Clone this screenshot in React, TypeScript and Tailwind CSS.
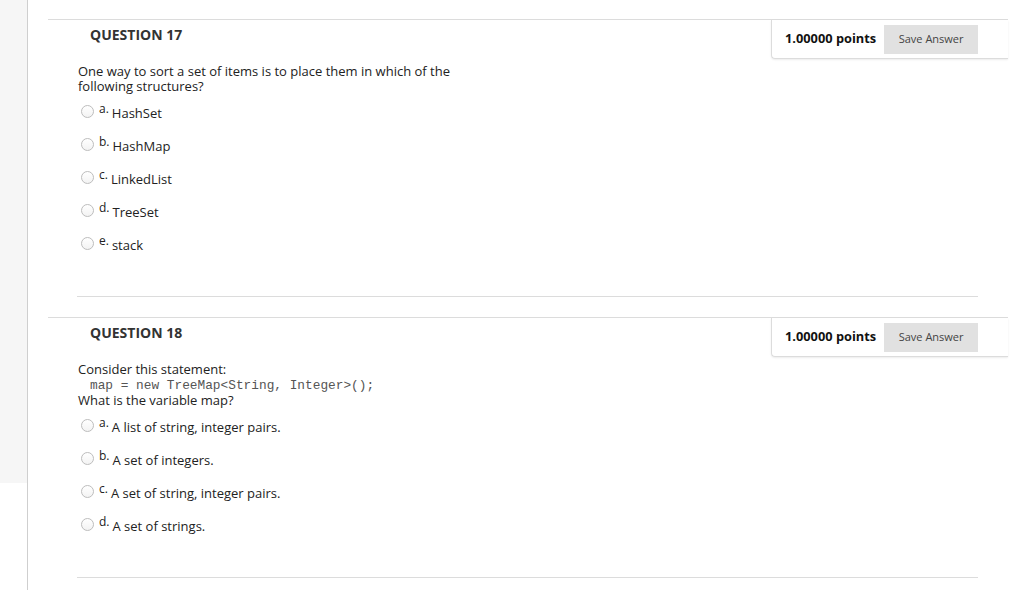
import React from 'react';

type Question = {
  num: number;
  prompt: React.ReactNode;
  options: { key: string; text: string }[];
};

const questions: Question[] = [
  {
    num: 17,
    prompt: (
      <>
        <div>One way to sort a set of items is to place them in which of the</div>
        <div>following structures?</div>
      </>
    ),
    options: [
      { key: 'a.', text: 'HashSet' },
      { key: 'b.', text: 'HashMap' },
      { key: 'c.', text: 'LinkedList' },
      { key: 'd.', text: 'TreeSet' },
      { key: 'e.', text: 'stack' },
    ],
  },
  {
    num: 18,
    prompt: (
      <>
        <div>Consider this statement:</div>
        <div className="pl-[12px] text-[12.8px] leading-[15px] pt-[1px] text-[#555] font-['Liberation_Mono',monospace] whitespace-pre">
          {'map = new TreeMap<String, Integer>();'}
        </div>
        <div>What is the variable map?</div>
      </>
    ),
    options: [
      { key: 'a.', text: 'A list of string, integer pairs.' },
      { key: 'b.', text: 'A set of integers.' },
      { key: 'c.', text: 'A set of string, integer pairs.' },
      { key: 'd.', text: 'A set of strings.' },
    ],
  },
];

function Radio() {
  return (
    <span className="w-[13px] h-[13px] rounded-full border border-[#bdbdbd] bg-gradient-to-b from-white to-[#f3f3f3] shrink-0" />
  );
}

function QuestionBlock({ q }: { q: Question }) {
  return (
    <div className="border-t border-[#dcdcdc]">
      <div className="flex h-[39px]">
        <div className="flex-1 pl-[42px] pt-[5px] text-[14px] font-bold text-[#333] leading-[20px]">
          QUESTION {q.num}
        </div>
        <div className="w-[237px] flex items-center pl-[13px] gap-[8px] border-l border-b border-[#dcdcdc] rounded-bl-[4px] shadow-[0_1px_2px_rgba(0,0,0,0.08)]">
          <span className="text-[12.8px] font-bold text-[#111] whitespace-nowrap">1.00000 points</span>
          <button className="w-[94px] h-[29px] bg-[#e1e1e1] text-[11px] text-[#444]">Save Answer</button>
        </div>
      </div>
      <div className="pl-[30px] pt-[5px] text-[13px] leading-[15px] text-[#222]">{q.prompt}</div>
      <div className="pl-[33px] mt-[1px]">
        {q.options.map((o) => (
          <div key={o.key} className="h-[33px] flex items-center">
            <Radio />
            <span className="ml-[5px] text-[12px] text-[#222] -translate-y-[3px]">{o.key}</span>
            <span className="ml-[3px] text-[13px] text-[#222] translate-y-[2px]">{o.text}</span>
          </div>
        ))}
      </div>
      <div className="ml-[29px] mr-[30px] mt-[36px] border-t border-[#dcdcdc] mb-[20px]" />
    </div>
  );
}

export default function App() {
  return (
    <div className="flex w-full h-[590px] bg-white font-['Open_Sans',sans-serif] overflow-hidden">
      <div className="w-[28px] border-r border-[#cfcfcf] shrink-0">
        <div className="h-[483px] bg-[#f6f6f6]" />
      </div>
      <div className="flex-1 pl-[20px] pr-[16px] pt-[19px]">
        {questions.map((q) => (
          <QuestionBlock key={q.num} q={q} />
        ))}
      </div>
    </div>
  );
}
